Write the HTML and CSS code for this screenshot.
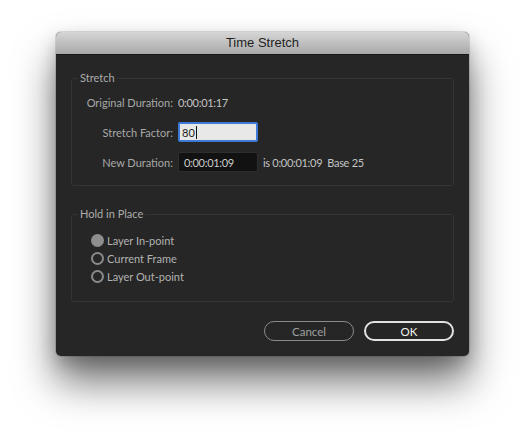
FILE: index.html
```html
<!DOCTYPE html>
<html lang="en">
<head>
    <meta charset="UTF-8">
    <title>Time Stretch</title>
    <link rel="stylesheet" href="styles.css">
</head>
<body>
    <div class="desktop">
        <div class="window">
            <div class="titlebar">Time Stretch</div>
            <div class="dialog">
                <fieldset class="group">
                    <legend>Stretch</legend>
                    <div class="form-grid">
                        <span class="label">Original Duration:</span>
                        <span class="value">0:00:01:17</span>

                        <span class="label">Stretch Factor:</span>
                        <span class="input input-active">80<span class="caret"></span></span>

                        <span class="label">New Duration:</span>
                        <span class="inline"><span class="input input-dark">0:00:01:09</span><span class="value note">is 0:00:01:09&nbsp;&nbsp;Base 25</span></span>
                    </div>
                </fieldset>

                <fieldset class="group group-hold">
                    <legend>Hold in Place</legend>
                    <div class="radio-list">
                        <div class="radio checked"><span class="dot"></span>Layer In-point</div>
                        <div class="radio"><span class="dot"></span>Current Frame</div>
                        <div class="radio"><span class="dot"></span>Layer Out-point</div>
                    </div>
                </fieldset>

                <div class="buttons">
                    <span class="btn btn-cancel">Cancel</span>
                    <span class="btn btn-ok">OK</span>
                </div>
            </div>
        </div>
    </div>
</body>
</html>
```

FILE: styles.css
```css
/* Pozadina */
body {
    margin: 0;
    background: #ffffff;
    font-family: Lato, "Open Sans", sans-serif;
}

.desktop {
    padding: 32px 0 0 56px;
    min-height: 437px;
    box-sizing: border-box;
}

/* Prozor */
.window {
    width: 413px;
    border-radius: 5px;
    background: #262626;
    box-shadow: 0 26px 40px rgba(0, 0, 0, 0.55), 0 8px 18px rgba(0, 0, 0, 0.2), 0 0 0 1px rgba(0, 0, 0, 0.12);
    overflow: hidden;
}

.titlebar {
    height: 22px;
    line-height: 22px;
    text-align: center;
    font-family: "Liberation Sans", Arial, sans-serif;
    font-size: 13px;
    color: #1e1e1e;
    background: linear-gradient(#d6d6d6, #a9a9a9);
    border-bottom: 1px solid #1a1a1a;
}

.dialog {
    padding: 16px 15px 15px 15px;
}

/* Grupe */
.group {
    margin: 0;
    padding: 7px 0 13px 0;
    border: 1px solid #343434;
    border-radius: 3px;
}

.group legend {
    margin-left: 6px;
    padding: 0 2px;
    font-size: 11px;
    line-height: 14px;
    color: #acacac;
}

.group-hold {
    margin-top: 21px;
    padding: 10px 0 16px 0;
}

.form-grid {
    display: grid;
    grid-template-columns: 101px 1fr;
    column-gap: 5px;
    row-gap: 10px;
    align-items: center;
}

.form-grid > * {
    height: 20px;
    display: flex;
    align-items: center;
}

.label {
    justify-content: flex-end;
    font-size: 11px;
    color: #a8a8a8;
}

.value {
    font-size: 11px;
    color: #c4c4c4;
    letter-spacing: -0.3px;
}

.note {
    margin-left: 5px;
}

.input {
    box-sizing: border-box;
    flex: none;
    width: 80px;
    height: 20px;
    font-size: 11px;
    display: flex;
    align-items: center;
}

.input-active {
    background: #e8e8e8;
    border: 2px solid #3d7bd6;
    border-radius: 2px;
    color: #1c1c1c;
    padding-left: 2px;
}

.caret {
    display: inline-block;
    width: 1px;
    height: 13px;
    background: #111;
    margin-left: 1px;
}

.input-dark {
    background: #121212;
    border: 1px solid #2e2e2e;
    border-radius: 2px;
    color: #cccccc;
    padding-left: 5px;
    letter-spacing: -0.3px;
}

/* Radio gumbi */
.radio-list {
    padding-left: 19px;
}

.radio {
    height: 18px;
    display: flex;
    align-items: center;
    gap: 3px;
    font-size: 11px;
    color: #b2b2b2;
}

.dot {
    box-sizing: border-box;
    width: 13px;
    height: 13px;
    border-radius: 50%;
    border: 2px solid #8a8a8a;
}

.radio.checked .dot {
    background: #8e8e8e;
    border-color: #8e8e8e;
}

/* Gumbi */
.buttons {
    margin-top: 19px;
    display: flex;
    justify-content: flex-end;
    gap: 10px;
}

.btn {
    box-sizing: border-box;
    width: 90px;
    height: 20px;
    border-radius: 10px;
    display: flex;
    align-items: center;
    justify-content: center;
    font-size: 11.5px;
}

.btn-cancel {
    border: 1px solid #8a8a8a;
    color: #a0a0a0;
}

.btn-ok {
    border: 2px solid #e2e2e2;
    color: #f2f2f2;
}
```
